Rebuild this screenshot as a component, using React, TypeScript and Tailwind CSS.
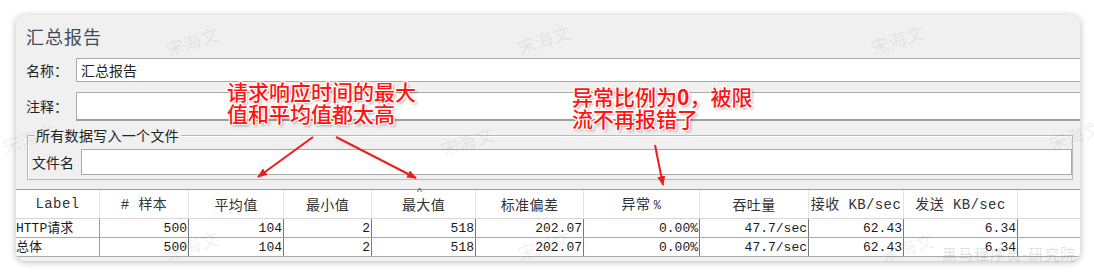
import React from "react";

const CJK = "font-['Noto_Sans_CJK_SC','Noto_Sans',sans-serif]";
const MONO = "font-['Liberation_Mono','Noto_Sans_CJK_SC',monospace]";

const cols = [84, 89, 95, 88, 104, 108, 116, 109, 95, 114];

const headers = ["Label", "# 样本", "平均值", "最小值", "最大值", "标准偏差", "异常 %", "吞吐量", "接收 KB/sec", "发送 KB/sec"];
const rows = [
  ["HTTP请求", "500", "104", "2", "518", "202.07", "0.00%", "47.7/sec", "62.43", "6.34"],
  ["总体", "500", "104", "2", "518", "202.07", "0.00%", "47.7/sec", "62.43", "6.34"],
];

const annot =
  "[text-shadow:1px_1px_0_#fff,-1px_-1px_0_#fff,1px_-1px_0_#fff,-1px_1px_0_#fff,0_1px_0_#fff,1px_0_0_#fff,2px_2px_3px_rgba(0,0,0,0.35)]";

function Watermark({ x, y, text = "宋海文" }: { x: number; y: number; text?: string }) {
  return (
    <span
      className={`absolute ${CJK} text-[18px] text-[rgba(0,0,0,0.07)] -rotate-[18deg] select-none pointer-events-none whitespace-nowrap`}
      style={{ left: x, top: y }}
    >
      {text}
    </span>
  );
}

export default function App() {
  return (
    <div className="relative w-[1094px] h-[278px] bg-white overflow-hidden pt-[15px] pl-[16px]">
      <div className="w-[1064px] h-[246px] rounded-[9px] bg-[#f0f0f0] overflow-hidden shadow-[0_1px_7px_rgba(0,0,0,0.28)] flex flex-col">
        {/* title */}
        <div className={`h-[43px] pl-[10px] flex items-center text-[18px] tracking-[1px] text-[#3d4b5e] ${CJK}`}>
          汇总报告
        </div>
        {/* name row */}
        <div className={`h-[24px] flex items-center ${CJK} text-[14px] text-[#222]`}>
          <div className="w-[60px] pl-[10px]">名称：</div>
          <div className="flex-1 h-full bg-white border border-[#ababab] mr-[-4px] pl-[4px] flex items-center">
            汇总报告
          </div>
        </div>
        {/* notes row */}
        <div className={`mt-[10px] h-[29px] flex items-center ${CJK} text-[14px] text-[#222]`}>
          <div className="w-[60px] pl-[10px]">注释：</div>
          <div className="flex-1 h-full bg-white border border-[#ababab] border-b-[2px] border-b-[#a0a0a0] mr-[-4px]" />
        </div>
        {/* group */}
        <div className="mt-[14px] ml-[11px] w-[1046px] h-[45px] border border-[#b9b9b9] relative shadow-[inset_1px_1px_0_#fff]">
          <span className={`absolute left-[6px] top-[-10px] px-[2px] bg-[#f0f0f0] text-[14px] leading-[18px] tracking-[0.3px] text-[#222] ${CJK}`}>
            所有数据写入一个文件
          </span>
          <div className={`pt-[13px] flex items-center ${CJK} text-[14px] text-[#222]`}>
            <div className="w-[53px] pl-[4px]">文件名</div>
            <div className="flex-1 h-[26px] bg-white border border-[#ababab]" />
          </div>
        </div>
        {/* table */}
        <div className="mt-[9px] border-t border-[#9c9c9c] bg-white">
          <div
            className="grid h-[29px] border-b border-[#d6d6d6]"
            style={{ gridTemplateColumns: cols.map((c) => `${c}px`).join(" ") + " 1fr" }}
          >
            {headers.map((h, i) => (
              <div
                key={i}
                className={`relative flex items-center justify-center border-r border-[#e4e4e4] text-[14px] text-[#333] tracking-[0.4px] ${
                  i === 0 ? `${MONO} text-[#3a2a2a]` : CJK
                } whitespace-pre`}
              >
                {i === 8 || i === 9 ? (
                  <span>
                    <span className={CJK}>{h.slice(0, 2)}</span>
                    <span className={MONO}>{h.slice(2)}</span>
                  </span>
                ) : i === 6 ? (
                  <span>
                    <span className={CJK}>异常 </span>
                    <span className={`${MONO} text-[12px]`}>%</span>
                  </span>
                ) : i === 1 ? (
                  <span>
                    <span className={MONO}># </span>
                    <span className={CJK}>样本</span>
                  </span>
                ) : (
                  h
                )}
                {i === 4 && (
                  <span className="absolute left-[45px] top-[-6px] text-[11px] text-[#555] font-['Liberation_Sans',sans-serif]">
                    ^
                  </span>
                )}
              </div>
            ))}
            <div />
          </div>
          {rows.map((r, ri) => (
            <div
              key={ri}
              className="grid h-[19px] border-b border-[#a8a8a8]"
              style={{ gridTemplateColumns: cols.map((c) => `${c}px`).join(" ") + " 1fr" }}
            >
              {r.map((c, ci) => (
                <div
                  key={ci}
                  className={`flex items-center ${MONO} text-[13px] text-[#1a1a1a] border-r ${
                    ci === 0 ? "justify-start border-[#9a9a9a]" : "justify-end pr-[1px] border-[#7a7a7a]"
                  } whitespace-nowrap leading-none`}
                >
                  {c}
                </div>
              ))}
              <div />
            </div>
          ))}
        </div>
      </div>

      {/* watermarks */}
      <Watermark x={165} y={28} />
      <Watermark x={517} y={26} />
      <Watermark x={870} y={26} />
      <Watermark x={2} y={125} />
      <Watermark x={440} y={128} />
      <Watermark x={1048} y={122} />
      <Watermark x={165} y={232} />
      <Watermark x={517} y={232} />
      <Watermark x={880} y={234} />
      <span className={`absolute left-[942px] top-[243px] ${CJK} text-[15px] tracking-[1px] text-[rgba(0,0,0,0.13)] whitespace-nowrap`}>
        黑马程序员-研究院
      </span>

      {/* annotations */}
      <div className={`absolute left-[227px] top-[80px] ${CJK} text-[21px] leading-[22px] text-[#ff1414] font-medium ${annot}`}>
        请求响应时间的最大
        <br />
        值和平均值都太高
      </div>
      <div className={`absolute left-[572px] top-[85px] ${CJK} text-[21px] leading-[22px] text-[#ff1414] font-medium ${annot}`}>
        异常比例为<span className="font-bold">0</span>，被限
        <br />
        流不再报错了
      </div>
      <svg className="absolute inset-0 pointer-events-none" width="1094" height="278" viewBox="0 0 1094 278">
        <defs>
          <marker id="ah" markerWidth="10" markerHeight="8" refX="9" refY="4" orient="auto" markerUnits="userSpaceOnUse">
            <path d="M0,0 L10,4 L0,8 Z" fill="#ee1c1c" />
          </marker>
        </defs>
        <g stroke="#ee1c1c" strokeWidth="2" fill="none">
          <line x1="313" y1="137" x2="258" y2="177" markerEnd="url(#ah)" />
          <line x1="336" y1="137" x2="416" y2="178" markerEnd="url(#ah)" />
          <line x1="655" y1="145" x2="663" y2="185" markerEnd="url(#ah)" />
        </g>
      </svg>
    </div>
  );
}
